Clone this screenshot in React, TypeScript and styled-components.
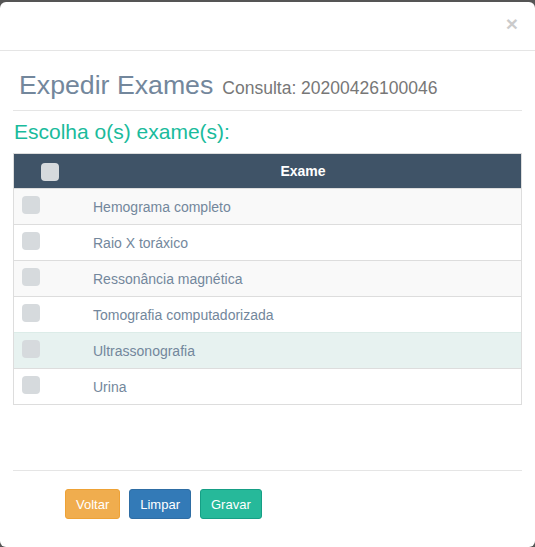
import React from "react";
import styled, { createGlobalStyle } from "styled-components";

const GlobalStyle = createGlobalStyle`
  html, body {
    margin: 0;
    padding: 0;
    background: #555555;
  }
  body {
    font-family: "Liberation Sans", Arial, sans-serif;
    font-size: 14px;
    color: #73879c;
  }
  * { box-sizing: border-box; }
`;

const Modal = styled.div`
  margin-top: 2px;
  width: 535px;
  height: 545px;
  background: #ffffff;
  border-radius: 6px;
  display: flex;
  flex-direction: column;
  overflow: hidden;
`;

const Header = styled.div`
  height: 49px;
  border-bottom: 1px solid #e5e5e5;
  display: flex;
  justify-content: flex-end;
  align-items: flex-start;
  padding: 11px 17px 0 0;
`;

const Close = styled.button`
  border: 0;
  background: transparent;
  padding: 0;
  font-family: "Liberation Sans", Arial, sans-serif;
  font-size: 21px;
  font-weight: bold;
  line-height: 1;
  color: #000;
  opacity: 0.2;
  cursor: pointer;
`;

const Body = styled.div`
  padding: 0 13px;
  display: flex;
  flex-direction: column;
  flex: 1;
`;

const TitleRow = styled.div`
  padding: 19px 0 10px 6px;
  border-bottom: 1px solid #e5e5e5;
  display: flex;
  align-items: baseline;
`;

const Title = styled.h3`
  margin: 0;
  font-size: 26.7px;
  line-height: 30px;
  font-weight: 400;
  color: #73879c;
`;

const Sub = styled.span`
  margin-left: 9px;
  font-size: 17.5px;
  color: #777777;
`;

const Choose = styled.h4`
  margin: 9px 0 9px 1px;
  font-size: 21px;
  line-height: 24px;
  font-weight: 400;
  color: #1abb9c;
`;

const Table = styled.div`
  border: 1px solid #dddddd;
  display: flex;
  flex-direction: column;
`;

const HeadRow = styled.div`
  height: 34px;
  display: grid;
  grid-template-columns: 71px 1fr;
  align-items: center;
  background: #3f5367;
  color: #ffffff;
  font-weight: bold;
  font-size: 14px;
`;

const HeadCheckCell = styled.div`
  display: flex;
  justify-content: center;
  padding-top: 2px;
`;

const HeadLabel = styled.div`
  text-align: center;
`;

const Row = styled.div<{ $striped: boolean; $hover?: boolean }>`
  height: 36px;
  border-top: 1px solid ${(p) => (p.$hover ? "#dcece8" : "#dddddd")};
  display: grid;
  grid-template-columns: 71px 1fr;
  align-items: center;
  background: ${(p) => (p.$hover ? "#e7f2f0" : p.$striped ? "#f9f9f9" : "#ffffff")};
`;

const CheckCell = styled.div`
  padding-left: 8px;
  display: flex;
  padding-bottom: 3px;
`;

const Check = styled.span`
  display: inline-block;
  width: 18px;
  height: 18px;
  border-radius: 4px;
  background: #d6dadd;
`;

const NameCell = styled.div`
  padding-left: 8px;
  color: #73879c;
  font-size: 14px;
`;

const Spacer = styled.div`
  flex: 1;
`;

const Footer = styled.div`
  border-top: 1px solid #e5e5e5;
  height: 77px;
  padding: 18px 0 0 52px;
  display: flex;
  align-items: flex-start;
  gap: 9px;
`;

const Btn = styled.button<{ $bg: string; $border: string }>`
  height: 30px;
  padding: 0 10px;
  border-radius: 3px;
  border: 1px solid ${(p) => p.$border};
  background: ${(p) => p.$bg};
  color: #ffffff;
  font-family: "Liberation Sans", Arial, sans-serif;
  font-size: 13px;
  cursor: pointer;
`;

const exames = [
  "Hemograma completo",
  "Raio X toráxico",
  "Ressonância magnética",
  "Tomografia computadorizada",
  "Ultrassonografia",
  "Urina",
];

export default function App() {
  return (
    <>
      <GlobalStyle />
      <Modal>
        <Header>
          <Close aria-label="Fechar">×</Close>
        </Header>
        <Body>
          <TitleRow>
            <Title>Expedir Exames</Title>
            <Sub>Consulta: 20200426100046</Sub>
          </TitleRow>
          <Choose>Escolha o(s) exame(s):</Choose>
          <Table>
            <HeadRow>
              <HeadCheckCell>
                <Check />
              </HeadCheckCell>
              <HeadLabel>Exame</HeadLabel>
            </HeadRow>
            {exames.map((e, i) => (
              <Row key={e} $striped={i % 2 === 0} $hover={i === 4}>
                <CheckCell>
                  <Check />
                </CheckCell>
                <NameCell>{e}</NameCell>
              </Row>
            ))}
          </Table>
          <Spacer />
          <Footer>
            <Btn $bg="#f0ad4e" $border="#eea236">Voltar</Btn>
            <Btn $bg="#337ab7" $border="#2e6da4">Limpar</Btn>
            <Btn $bg="#26b99a" $border="#169f85">Gravar</Btn>
          </Footer>
        </Body>
      </Modal>
    </>
  );
}
